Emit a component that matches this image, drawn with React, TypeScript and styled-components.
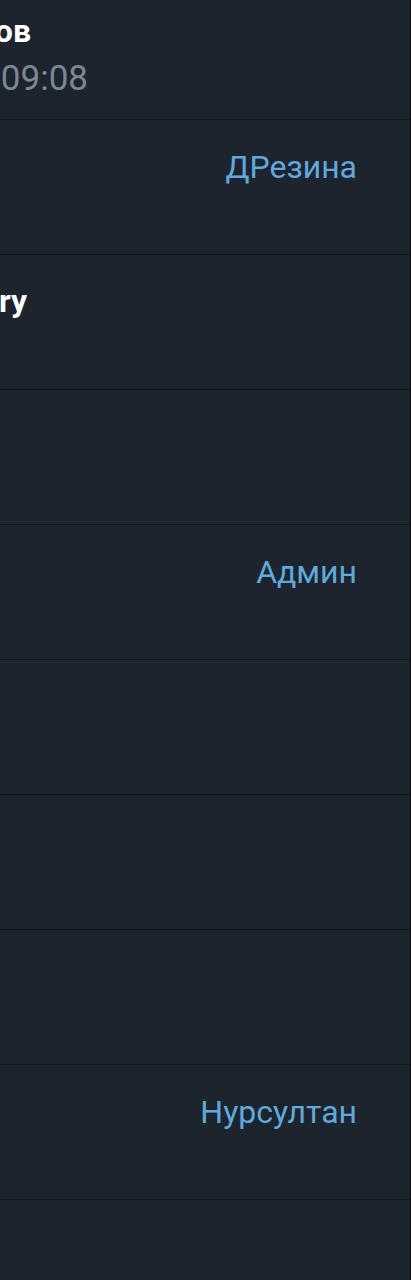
import React from 'react'
import styled, { createGlobalStyle } from 'styled-components'

const GlobalStyle = createGlobalStyle`
    html, body {
        margin: 0;
        padding: 0;
        background: #1d242e;
    }
    body {
        font-family: Roboto, "Noto Sans", "Liberation Sans", sans-serif;
        -webkit-font-smoothing: antialiased;
    }
`

const Screen = styled.div`
    width: 411px;
    height: 1280px;
    box-sizing: border-box;
    background: #1d242e;
    border-right: 1px solid #05080b;
    overflow: hidden;
`

// the list starts scrolled: first row is partly above the top edge
const MemberList = styled.div`
    display: flex;
    flex-direction: column;
    margin-top: -15px;
`

const MemberRow = styled.div`
    height: 135px;
    box-sizing: border-box;
    border-bottom: 1px solid #11161d;
    display: flex;
    justify-content: space-between;
    align-items: flex-start;
    padding: 26px 53px 0 0;
`

const Info = styled.div`
    display: flex;
    flex-direction: column;
    gap: 8px;
`

// line whose text ends at a given x and is cut on the left side
const ClipLine = styled.div<{ $end: number }>`
    width: ${p => p.$end}px;
    height: 40px;
    display: flex;
    justify-content: flex-end;
    overflow: hidden;
    white-space: nowrap;
`

const Name = styled.span`
    color: #ffffff;
    font-size: 32px;
    line-height: 40px;
    font-weight: 700;
`

const Status = styled.span`
    color: #7d8791;
    font-size: 35px;
    line-height: 40px;
`

const Role = styled.span`
    margin-top: 1px;
    color: #5fa9dc;
    font-size: 32px;
    line-height: 40px;
    white-space: nowrap;
`

type Member = {
    name?: string
    nameEnd?: number
    status?: string
    statusEnd?: number
    role?: string
}

const members: Member[] = [
    { name: 'Дмитрий Смирнов', nameEnd: 31, status: 'был(а) сегодня в 09:08', statusEnd: 88 },
    { role: 'ДРезина' },
    { name: 'Larry', nameEnd: 27 },
    {},
    { role: 'Админ' },
    {},
    {},
    {},
    { role: 'Нурсултан' },
    {},
]

const MemberItem: React.FC<{ member: Member }> = ({ member }) => {
    return (
        <MemberRow>
            <Info>
                {member.name && (
                    <ClipLine $end={member.nameEnd || 0}>
                        <Name>{member.name}</Name>
                    </ClipLine>
                )}
                {member.status && (
                    <ClipLine $end={member.statusEnd || 0}>
                        <Status>{member.status}</Status>
                    </ClipLine>
                )}
            </Info>
            {member.role && <Role>{member.role}</Role>}
        </MemberRow>
    )
}

const App: React.FC = () => {
    return (
        <>
            <GlobalStyle />
            <Screen>
                <MemberList>
                    {members.map((m, i) => (
                        <MemberItem key={i} member={m} />
                    ))}
                </MemberList>
            </Screen>
        </>
    )
}

export default App
